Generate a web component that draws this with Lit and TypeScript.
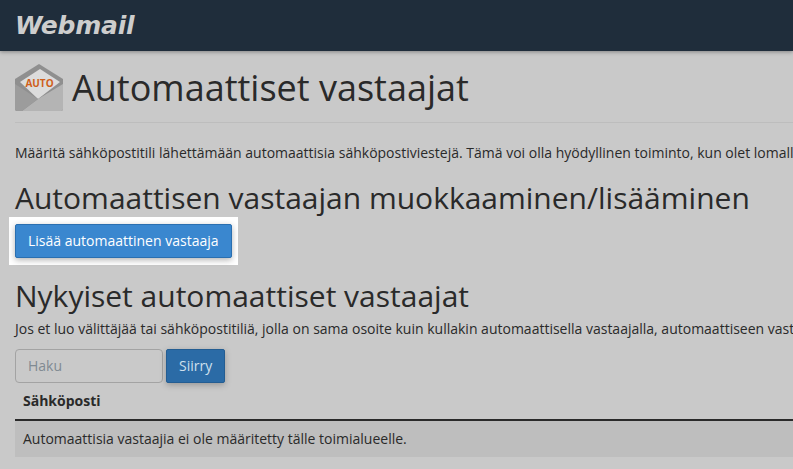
import { LitElement, html, css } from "lit";
import { customElement } from "lit/decorators.js";

@customElement("app-root")
export class AppRoot extends LitElement {
    static styles = css`
        :host {
            display: block;
            width: 793px;
            height: 469px;
            overflow: hidden;
            background: #c9c9c9;
            color: #2a2a2a;
            font-family: "Open Sans", "Liberation Sans", sans-serif;
            font-size: 14px;
        }
        .topbar {
            height: 51px;
            background: #1f2d3b;
            box-shadow: 0 1px 4px rgba(0, 0, 0, 0.35);
            display: flex;
            align-items: center;
            padding-left: 15px;
            box-sizing: border-box;
        }
        .logo {
            font-family: "DejaVu Sans", sans-serif;
            font-style: italic;
            font-weight: 700;
            font-size: 25px;
            letter-spacing: -0.2px;
            color: #cdcdcd;
            white-space: nowrap;
        }
        .body {
            padding: 0 0 0 15px;
            width: 1400px;
        }
        .title {
            display: flex;
            align-items: center;
            gap: 9px;
            height: 71px;
            padding-top: 1px;
            box-sizing: border-box;
            margin-top: 1px;
            border-bottom: 1px solid #bdbdbd;
            width: 778px;
        }
        h1 {
            margin: 0;
            font-size: 36px;
            font-weight: 400;
            line-height: 40px;
            white-space: nowrap;
        }
        .intro {
            margin: 0;
            padding-top: 20px;
            line-height: 20px;
            white-space: nowrap;
        }
        h2 {
            margin: 0;
            font-size: 30px;
            font-weight: 400;
            line-height: 33px;
            white-space: nowrap;
        }
        .edit {
            margin-top: 18px;
        }
        .spot {
            display: inline-block;
            margin: 3px 0 0 -6px;
            padding: 7px 6px;
            background: #fff;
            vertical-align: top;
        }
        .btn {
            display: block;
            height: 34px;
            box-sizing: border-box;
            padding: 0 12px;
            border: 1px solid #2a6fb0;
            border-radius: 2px;
            color: #fff;
            font: inherit;
            line-height: 32px;
            white-space: nowrap;
        }
        .primary {
            background: #3a87cf;
            box-shadow: 0 2px 6px rgba(0, 0, 0, 0.3);
        }
        .current {
            margin-top: 14px;
        }
        .note {
            margin: 7px 0 0;
            line-height: 20px;
            white-space: nowrap;
        }
        .search {
            display: flex;
            gap: 3px;
            margin-top: 10px;
        }
        .input {
            width: 148px;
            height: 34px;
            box-sizing: border-box;
            padding-left: 12px;
            border: 1px solid #a3a3a3;
            border-radius: 4px;
            color: #808a92;
            line-height: 32px;
        }
        .go {
            background: #2b6ba6;
            border-color: #245d92;
            color: #cfe0ee;
            box-shadow: 0 2px 6px rgba(0, 0, 0, 0.25);
        }
        .table {
            width: 778px;
            margin-top: 1px;
        }
        .th {
            height: 35px;
            padding-left: 8px;
            font-weight: 700;
            line-height: 34px;
            border-bottom: 2px solid #2a2a2a;
        }
        .td {
            height: 36px;
            padding-left: 8px;
            background: #bebebe;
            line-height: 36px;
            white-space: nowrap;
        }
    `;

    render() {
        return html`
            <div class="topbar"><span class="logo">Webmail</span></div>
            <div class="body">
                <div class="title">
                    <svg width="48" height="48" viewBox="0 0 48 48">
                        <path d="M0 15 L24 0 L48 15 V45 a2 2 0 0 1 -2 2 H2 a2 2 0 0 1 -2 -2 Z" fill="#8f8f8f"/>
                        <path d="M5 18 L25 5 L45 18 L23 35 Z" fill="#dcdcdc"/>
                        <path d="M48 20 V45 a2 2 0 0 1 -2 2 H7 L23 35 Z" fill="#b4b4b4"/>
                        <path d="M0 20 L23 35 L7 47 H2 a2 2 0 0 1 -2 -2 Z" fill="#9c9c9c"/>
                        <text x="24.5" y="22.5" text-anchor="middle" font-size="10" font-weight="700" fill="#cf5f1a" font-family="Open Sans, sans-serif">AUTO</text>
                    </svg>
                    <h1>Automaattiset vastaajat</h1>
                </div>
                <p class="intro">Määritä sähköpostitili lähettämään automaattisia sähköpostiviestejä. Tämä voi olla hyödyllinen toiminto, kun olet lomalla tai muuten poissa.</p>
                <h2 class="edit">Automaattisen vastaajan muokkaaminen/lisääminen</h2>
                <div class="spot"><div class="btn primary">Lisää automaattinen vastaaja</div></div>
                <h2 class="current">Nykyiset automaattiset vastaajat</h2>
                <p class="note">Jos et luo välittäjää tai sähköpostitiliä, jolla on sama osoite kuin kullakin automaattisella vastaajalla, automaattiseen vastaajaan lähetetyt viestit poistetaan.</p>
                <div class="search">
                    <div class="input">Haku</div>
                    <div class="btn go">Siirry</div>
                </div>
                <div class="table">
                    <div class="th">Sähköposti</div>
                    <div class="td">Automaattisia vastaajia ei ole määritetty tälle toimialueelle.</div>
                </div>
            </div>
        `;
    }
}
